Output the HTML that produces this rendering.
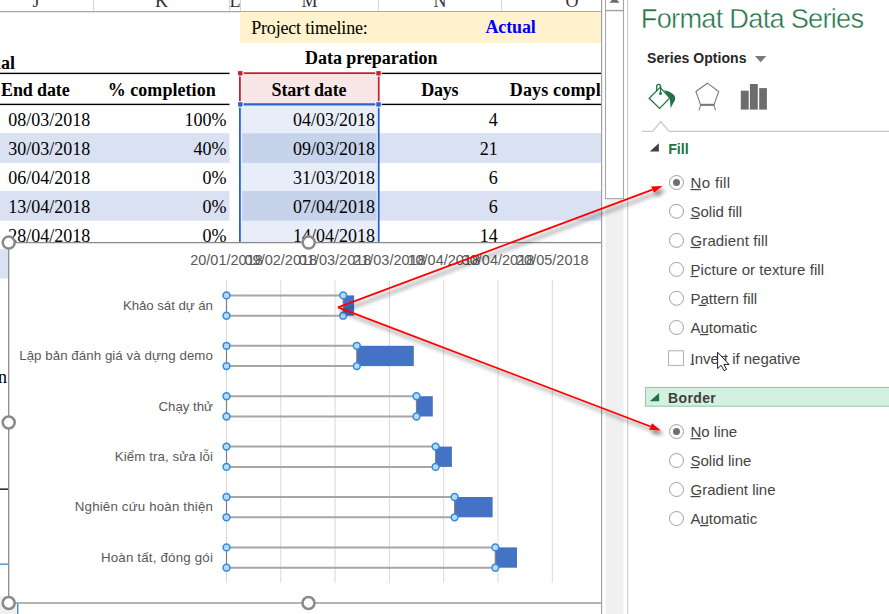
<!DOCTYPE html><html><head><meta charset="utf-8"><style>html,body{margin:0;padding:0;background:#fff;overflow:hidden}svg{display:block}</style></head><body><svg width="889" height="614" viewBox="0 0 889 614"><defs><filter id="sh" x="-20%" y="-20%" width="140%" height="140%"><feGaussianBlur in="SourceAlpha" stdDeviation="2.3"/><feOffset dx="2.5" dy="3.8" result="b"/><feComponentTransfer><feFuncA type="linear" slope="0.55"/></feComponentTransfer><feMerge><feMergeNode/><feMergeNode in="SourceGraphic"/></feMerge></filter></defs><rect width="889" height="614" fill="#fff"/><text x="36" y="6.7" font-family="Liberation Serif" font-size="18" fill="#333" text-anchor="middle">J</text><text x="161.4" y="6.7" font-family="Liberation Serif" font-size="18" fill="#333" text-anchor="middle">K</text><text x="235" y="6.7" font-family="Liberation Serif" font-size="18" fill="#333" text-anchor="middle">L</text><text x="309.5" y="6.7" font-family="Liberation Serif" font-size="18" fill="#333" text-anchor="middle">M</text><text x="440" y="6.7" font-family="Liberation Serif" font-size="18" fill="#333" text-anchor="middle">N</text><text x="572" y="6.7" font-family="Liberation Serif" font-size="18" fill="#333" text-anchor="middle">O</text><rect x="93.0" y="0" width="1" height="11" fill="#d4d4d4"/><rect x="229.0" y="0" width="1" height="11" fill="#d4d4d4"/><rect x="240.0" y="0" width="1" height="11" fill="#d4d4d4"/><rect x="378.0" y="0" width="1" height="11" fill="#d4d4d4"/><rect x="501.0" y="0" width="1" height="11" fill="#d4d4d4"/><rect x="0" y="11" width="601" height="1.3" fill="#ababab"/><rect x="240" y="12" width="361" height="31" fill="#fff2cc"/><text x="251.2" y="33.8" font-family="Liberation Serif" font-size="18" fill="#000" textLength="116.6">Project timeline:</text><text x="485.5" y="33" font-family="Liberation Serif" font-size="18" font-weight="bold" fill="#0000ff" textLength="50.3">Actual</text><text x="14.9" y="68.6" font-family="Liberation Serif" font-size="18" font-weight="bold" fill="#000" text-anchor="end">Actual</text><text x="305.1" y="63.6" font-family="Liberation Serif" font-size="18" font-weight="bold" fill="#000" textLength="132.4">Data preparation</text><rect x="0" y="133.2" width="229.5" height="29.7" fill="#d9e1f2"/><rect x="379" y="133.2" width="222" height="29.7" fill="#d9e1f2"/><rect x="0" y="191" width="229.5" height="29.7" fill="#d9e1f2"/><rect x="379" y="191" width="222" height="29.7" fill="#d9e1f2"/><rect x="0" y="249.2" width="229.5" height="29.3" fill="#d9e1f2"/><rect x="379" y="249.2" width="222" height="29.3" fill="#d9e1f2"/><rect x="0" y="72.7" width="229.5" height="1.4" fill="#000"/><rect x="379" y="72.7" width="222" height="1.4" fill="#000"/><rect x="0" y="103.7" width="229.5" height="1.4" fill="#000"/><rect x="379" y="103.7" width="222" height="1.4" fill="#000"/><rect x="241.3" y="74.6" width="135.9" height="28.6" fill="#f9e6e6"/><rect x="241" y="105.3" width="136.5" height="146" fill="#e8eef9"/><rect x="242.2" y="133.2" width="134.4" height="29.7" fill="#c7d3eb"/><rect x="242.2" y="191" width="134.4" height="29.7" fill="#c7d3eb"/><text x="1.1" y="95.7" font-family="Liberation Serif" font-size="18" font-weight="bold" fill="#000" textLength="68.6">End date</text><text x="107.7" y="95.6" font-family="Liberation Serif" font-size="18" font-weight="bold" fill="#000" textLength="108">% completion</text><text x="271.6" y="95.6" font-family="Liberation Serif" font-size="18" font-weight="bold" fill="#000" textLength="74.9">Start date</text><text x="421.3" y="95.6" font-family="Liberation Serif" font-size="18" font-weight="bold" fill="#000" textLength="37.2">Days</text><clipPath id="cp"><rect x="0" y="0" width="601" height="614"/></clipPath><text x="509.8" y="95.6" font-family="Liberation Serif" font-size="18" font-weight="bold" fill="#000" clip-path="url(#cp)" textLength="123.6">Days completed</text><text x="90.2" y="125.8" font-family="Liberation Serif" font-size="18" fill="#000" text-anchor="end">08/03/2018</text><text x="226.4" y="125.8" font-family="Liberation Serif" font-size="18" fill="#000" text-anchor="end">100%</text><text x="375" y="125.8" font-family="Liberation Serif" font-size="18" fill="#000" text-anchor="end">04/03/2018</text><text x="497.7" y="125.8" font-family="Liberation Serif" font-size="18" fill="#000" text-anchor="end">4</text><text x="90.2" y="154.8" font-family="Liberation Serif" font-size="18" fill="#000" text-anchor="end">30/03/2018</text><text x="226.4" y="154.8" font-family="Liberation Serif" font-size="18" fill="#000" text-anchor="end">40%</text><text x="375" y="154.8" font-family="Liberation Serif" font-size="18" fill="#000" text-anchor="end">09/03/2018</text><text x="497.7" y="154.8" font-family="Liberation Serif" font-size="18" fill="#000" text-anchor="end">21</text><text x="90.2" y="183.8" font-family="Liberation Serif" font-size="18" fill="#000" text-anchor="end">06/04/2018</text><text x="226.4" y="183.8" font-family="Liberation Serif" font-size="18" fill="#000" text-anchor="end">0%</text><text x="375" y="183.8" font-family="Liberation Serif" font-size="18" fill="#000" text-anchor="end">31/03/2018</text><text x="497.7" y="183.8" font-family="Liberation Serif" font-size="18" fill="#000" text-anchor="end">6</text><text x="90.2" y="212.8" font-family="Liberation Serif" font-size="18" fill="#000" text-anchor="end">13/04/2018</text><text x="226.4" y="212.8" font-family="Liberation Serif" font-size="18" fill="#000" text-anchor="end">0%</text><text x="375" y="212.8" font-family="Liberation Serif" font-size="18" fill="#000" text-anchor="end">07/04/2018</text><text x="497.7" y="212.8" font-family="Liberation Serif" font-size="18" fill="#000" text-anchor="end">6</text><text x="90.2" y="241.8" font-family="Liberation Serif" font-size="18" fill="#000" text-anchor="end">28/04/2018</text><text x="226.4" y="241.8" font-family="Liberation Serif" font-size="18" fill="#000" text-anchor="end">0%</text><text x="375" y="241.8" font-family="Liberation Serif" font-size="18" fill="#000" text-anchor="end">14/04/2018</text><text x="497.7" y="241.8" font-family="Liberation Serif" font-size="18" fill="#000" text-anchor="end">14</text><rect x="239.9" y="73.2" width="138.8" height="31.2" fill="none" stroke="#c3202e" stroke-width="1.8"/><path d="M239.9 104.4 V250 M378.7 104.4 V250 M239.9 104.4 H378.7" fill="none" stroke="#2b62c9" stroke-width="1.8"/><rect x="237.60000000000002" y="70.6" width="5.4" height="5.4" fill="#c3202e" stroke="#fff" stroke-width="1"/><rect x="237.60000000000002" y="101.7" width="5.4" height="5.4" fill="#2b62c9" stroke="#fff" stroke-width="1"/><rect x="375.8" y="70.6" width="5.4" height="5.4" fill="#c3202e" stroke="#fff" stroke-width="1"/><rect x="375.8" y="101.7" width="5.4" height="5.4" fill="#2b62c9" stroke="#fff" stroke-width="1"/><text x="7" y="383" font-family="Liberation Serif" font-size="18" fill="#000" text-anchor="end">n</text><rect x="0" y="488.5" width="8" height="1.3" fill="#000"/><rect x="0" y="563.5" width="8" height="1.3" fill="#2d8ce0"/><rect x="0" y="596" width="16" height="18" fill="#f0f0f0"/><rect x="17" y="603" width="1.4" height="11" fill="#2d8ce0"/><rect x="8.7" y="242.6" width="600" height="360.4" fill="#fff"/><rect x="8.7" y="242.6" width="600.3" height="360.4" fill="none" stroke="#8c8c8c" stroke-width="1.3"/><rect x="226.0" y="280.4" width="1" height="302.3" fill="#d9d9d9"/><rect x="280.3" y="280.4" width="1" height="302.3" fill="#d9d9d9"/><rect x="334.6" y="280.4" width="1" height="302.3" fill="#d9d9d9"/><rect x="388.9" y="280.4" width="1" height="302.3" fill="#d9d9d9"/><rect x="443.2" y="280.4" width="1" height="302.3" fill="#d9d9d9"/><rect x="497.5" y="280.4" width="1" height="302.3" fill="#d9d9d9"/><rect x="551.8" y="280.4" width="1" height="302.3" fill="#d9d9d9"/><text x="226.5" y="264.8" font-family="Liberation Sans" font-size="14.5" fill="#595959" text-anchor="middle">20/01/2018</text><text x="280.8" y="264.8" font-family="Liberation Sans" font-size="14.5" fill="#595959" text-anchor="middle">09/02/2018</text><text x="335.1" y="264.8" font-family="Liberation Sans" font-size="14.5" fill="#595959" text-anchor="middle">01/03/2018</text><text x="389.4" y="264.8" font-family="Liberation Sans" font-size="14.5" fill="#595959" text-anchor="middle">21/03/2018</text><text x="443.7" y="264.8" font-family="Liberation Sans" font-size="14.5" fill="#595959" text-anchor="middle">10/04/2018</text><text x="498.0" y="264.8" font-family="Liberation Sans" font-size="14.5" fill="#595959" text-anchor="middle">30/04/2018</text><text x="552.3" y="264.8" font-family="Liberation Sans" font-size="14.5" fill="#595959" text-anchor="middle">20/05/2018</text><text x="122.9" y="309.9" font-family="Liberation Sans" font-size="13.3" fill="#595959" textLength="90">Khảo sát dự án</text><rect x="343.2" y="295.4" width="10.9" height="20.3" fill="#4472c4"/><path d="M226.5 295.4 H343.2 M226.5 315.7 H343.2" stroke="#a6a6a6" stroke-width="2" fill="none"/><path d="M226.5 295.4 V315.7 M343.2 295.4 V315.7" stroke="#808080" stroke-width="1.2" fill="none"/><circle cx="226.5" cy="295.4" r="3.4" fill="#b9d8f3" stroke="#2f8be0" stroke-width="1.5"/><circle cx="226.5" cy="315.7" r="3.4" fill="#b9d8f3" stroke="#2f8be0" stroke-width="1.5"/><circle cx="343.2" cy="295.4" r="3.4" fill="#b9d8f3" stroke="#2f8be0" stroke-width="1.5"/><circle cx="343.2" cy="315.7" r="3.4" fill="#b9d8f3" stroke="#2f8be0" stroke-width="1.5"/><text x="19.200000000000017" y="360.3" font-family="Liberation Sans" font-size="13.3" fill="#595959" textLength="193.7">Lập bản đánh giá và dựng demo</text><rect x="356.8" y="345.8" width="57.0" height="20.3" fill="#4472c4"/><path d="M226.5 345.8 H356.8 M226.5 366.1 H356.8" stroke="#a6a6a6" stroke-width="2" fill="none"/><path d="M226.5 345.8 V366.1 M356.8 345.8 V366.1" stroke="#808080" stroke-width="1.2" fill="none"/><circle cx="226.5" cy="345.8" r="3.4" fill="#b9d8f3" stroke="#2f8be0" stroke-width="1.5"/><circle cx="226.5" cy="366.1" r="3.4" fill="#b9d8f3" stroke="#2f8be0" stroke-width="1.5"/><circle cx="356.8" cy="345.8" r="3.4" fill="#b9d8f3" stroke="#2f8be0" stroke-width="1.5"/><circle cx="356.8" cy="366.1" r="3.4" fill="#b9d8f3" stroke="#2f8be0" stroke-width="1.5"/><text x="158.5" y="410.7" font-family="Liberation Sans" font-size="13.3" fill="#595959" textLength="54.4">Chạy thử</text><rect x="416.5" y="396.2" width="16.3" height="20.3" fill="#4472c4"/><path d="M226.5 396.2 H416.5 M226.5 416.5 H416.5" stroke="#a6a6a6" stroke-width="2" fill="none"/><path d="M226.5 396.2 V416.5 M416.5 396.2 V416.5" stroke="#808080" stroke-width="1.2" fill="none"/><circle cx="226.5" cy="396.2" r="3.4" fill="#b9d8f3" stroke="#2f8be0" stroke-width="1.5"/><circle cx="226.5" cy="416.5" r="3.4" fill="#b9d8f3" stroke="#2f8be0" stroke-width="1.5"/><circle cx="416.5" cy="396.2" r="3.4" fill="#b9d8f3" stroke="#2f8be0" stroke-width="1.5"/><circle cx="416.5" cy="416.5" r="3.4" fill="#b9d8f3" stroke="#2f8be0" stroke-width="1.5"/><text x="114.80000000000001" y="461.0" font-family="Liberation Sans" font-size="13.3" fill="#595959" textLength="98.1">Kiểm tra, sửa lỗi</text><rect x="435.6" y="446.6" width="16.3" height="20.3" fill="#4472c4"/><path d="M226.5 446.6 H435.6 M226.5 466.9 H435.6" stroke="#a6a6a6" stroke-width="2" fill="none"/><path d="M226.5 446.6 V466.9 M435.6 446.6 V466.9" stroke="#808080" stroke-width="1.2" fill="none"/><circle cx="226.5" cy="446.6" r="3.4" fill="#b9d8f3" stroke="#2f8be0" stroke-width="1.5"/><circle cx="226.5" cy="466.9" r="3.4" fill="#b9d8f3" stroke="#2f8be0" stroke-width="1.5"/><circle cx="435.6" cy="446.6" r="3.4" fill="#b9d8f3" stroke="#2f8be0" stroke-width="1.5"/><circle cx="435.6" cy="466.9" r="3.4" fill="#b9d8f3" stroke="#2f8be0" stroke-width="1.5"/><text x="74.80000000000001" y="511.4" font-family="Liberation Sans" font-size="13.3" fill="#595959" textLength="138.1">Nghiên cứu hoàn thiện</text><rect x="454.6" y="497.0" width="38.0" height="20.3" fill="#4472c4"/><path d="M226.5 497.0 H454.6 M226.5 517.3 H454.6" stroke="#a6a6a6" stroke-width="2" fill="none"/><path d="M226.5 497.0 V517.3 M454.6 497.0 V517.3" stroke="#808080" stroke-width="1.2" fill="none"/><circle cx="226.5" cy="497.0" r="3.4" fill="#b9d8f3" stroke="#2f8be0" stroke-width="1.5"/><circle cx="226.5" cy="517.3" r="3.4" fill="#b9d8f3" stroke="#2f8be0" stroke-width="1.5"/><circle cx="454.6" cy="497.0" r="3.4" fill="#b9d8f3" stroke="#2f8be0" stroke-width="1.5"/><circle cx="454.6" cy="517.3" r="3.4" fill="#b9d8f3" stroke="#2f8be0" stroke-width="1.5"/><text x="100.9" y="561.8" font-family="Liberation Sans" font-size="13.3" fill="#595959" textLength="112">Hoàn tất, đóng gói</text><rect x="495.3" y="547.4" width="21.7" height="20.3" fill="#4472c4"/><path d="M226.5 547.4 H495.3 M226.5 567.7 H495.3" stroke="#a6a6a6" stroke-width="2" fill="none"/><path d="M226.5 547.4 V567.7 M495.3 547.4 V567.7" stroke="#808080" stroke-width="1.2" fill="none"/><circle cx="226.5" cy="547.4" r="3.4" fill="#b9d8f3" stroke="#2f8be0" stroke-width="1.5"/><circle cx="226.5" cy="567.7" r="3.4" fill="#b9d8f3" stroke="#2f8be0" stroke-width="1.5"/><circle cx="495.3" cy="547.4" r="3.4" fill="#b9d8f3" stroke="#2f8be0" stroke-width="1.5"/><circle cx="495.3" cy="567.7" r="3.4" fill="#b9d8f3" stroke="#2f8be0" stroke-width="1.5"/><circle cx="8.7" cy="242.6" r="6" fill="#fff" stroke="#8a8a8a" stroke-width="2.5"/><circle cx="308.7" cy="242.6" r="6" fill="#fff" stroke="#8a8a8a" stroke-width="2.5"/><circle cx="8.7" cy="422.5" r="6" fill="#fff" stroke="#8a8a8a" stroke-width="2.5"/><circle cx="8.7" cy="603" r="6" fill="#fff" stroke="#8a8a8a" stroke-width="2.5"/><circle cx="308.5" cy="603" r="6" fill="#fff" stroke="#8a8a8a" stroke-width="2.5"/><rect x="601.5" y="0" width="26" height="614" fill="#fff"/><rect x="601" y="0" width="1.2" height="614" fill="#a0a0a0"/><rect x="605.5" y="0" width="18" height="614" fill="#f0f0f0"/><rect x="605.5" y="-1" width="18" height="199.6" fill="#fff" stroke="#a6a6a6" stroke-width="1.1"/><rect x="605.5" y="9.8" width="18" height="1.5" fill="#a6a6a6"/><path d="M609.5 2.7 L619.5 2.7 L614.5 -3 Z" fill="#6a6a6a"/><rect x="627" y="0" width="1.2" height="614" fill="#d0d0d0"/><text x="640.8" y="28" font-family="Liberation Sans" font-size="27.2" fill="#217346" textLength="223.3">Format Data Series</text><text x="640.8" y="28" font-family="Liberation Sans" font-size="27.2" fill="none" stroke="#fff" stroke-width="0.45" textLength="223.3">Format Data Series</text><text x="647" y="63.3" font-family="Liberation Sans" font-size="14" font-weight="bold" fill="#262626" textLength="99.5">Series Options</text><path d="M755 56 L766.3 56 L760.65 62.3 Z" fill="#7a7a7a"/><g fill="none" stroke="#217346" stroke-width="1.25"><path d="M649.2 98.2 L659.6 108.4 L669.9 98 L660.1 87.3 Z"/><path d="M656.7 91.2 V86.6 Q656.7 84.4 658.65 84.4 Q660.6 84.4 660.6 86.6 V93.5"/></g><circle cx="660.5" cy="93.6" r="1.5" fill="#217346"/><path d="M664 90.2 Q671.5 91.5 674.6 95.8 Q676.3 99.5 673.4 102.8 L670.6 108.2 L669.9 98 Z" fill="#217346"/><g fill="none" stroke="#777" stroke-width="1.05"><path d="M707.4 83.2 L718.7 91.5 L714 104.9 L700.6 104.9 L695.9 91.5 Z"/><path d="M700.6 104.9 L699 110.5 M714 104.9 L715.5 110.5" stroke-width="1"/></g><rect x="700.6" y="103.8" width="13.4" height="2" fill="#777"/><g fill="#6d6d6d"><rect x="740.8" y="90.7" width="7.9" height="18.9"/><rect x="749.9" y="84" width="7.9" height="25.6"/><rect x="759.2" y="88.1" width="7.7" height="21.5"/></g><path d="M642 131.3 H652.6 L660.8 121.5 L669.1 131.3 H889" fill="none" stroke="#c8c8c8" stroke-width="1.2"/><path d="M649.8 151.5 L658.9 151.5 L658.9 143.2 Z" fill="#404040"/><text x="668.2" y="153.9" font-family="Liberation Sans" font-size="14.3" font-weight="bold" fill="#217346" textLength="20.5">Fill</text><circle cx="676.5" cy="182.5" r="7" fill="#fff" stroke="#a0a0a0" stroke-width="1"/><circle cx="676.5" cy="182.5" r="3.5" fill="#707070"/><text x="690.5" y="187.9" font-family="Liberation Sans" font-size="15" fill="#444" textLength="39.6">No fill</text><circle cx="676.5" cy="211.3" r="7" fill="#fff" stroke="#a0a0a0" stroke-width="1"/><text x="690.5" y="216.7" font-family="Liberation Sans" font-size="15" fill="#444">Solid fill</text><circle cx="676.5" cy="240.4" r="7" fill="#fff" stroke="#a0a0a0" stroke-width="1"/><text x="690.5" y="245.8" font-family="Liberation Sans" font-size="15" fill="#444" textLength="77.3">Gradient fill</text><circle cx="676.5" cy="269.4" r="7" fill="#fff" stroke="#a0a0a0" stroke-width="1"/><text x="690.5" y="274.8" font-family="Liberation Sans" font-size="15" fill="#444" textLength="133.5">Picture or texture fill</text><circle cx="676.5" cy="298.3" r="7" fill="#fff" stroke="#a0a0a0" stroke-width="1"/><text x="690.5" y="303.7" font-family="Liberation Sans" font-size="15" fill="#444">Pattern fill</text><circle cx="676.5" cy="327.5" r="7" fill="#fff" stroke="#a0a0a0" stroke-width="1"/><text x="690.5" y="332.9" font-family="Liberation Sans" font-size="15" fill="#444">Automatic</text><rect x="690.5" y="189.0" width="10.5" height="1.2" fill="#444"/><rect x="690.5" y="217.8" width="8.5" height="1.2" fill="#444"/><rect x="690.5" y="246.9" width="10.0" height="1.2" fill="#444"/><rect x="690.5" y="275.9" width="8.0" height="1.2" fill="#444"/><rect x="698.5" y="304.8" width="8.0" height="1.2" fill="#444"/><rect x="700" y="334.0" width="8.5" height="1.2" fill="#444"/><rect x="668.5" y="350.8" width="15" height="14.6" fill="#fff" stroke="#b0b0b0" stroke-width="1"/><text x="690.6" y="363.5" font-family="Liberation Sans" font-size="15" fill="#444" textLength="109.8">Invert if negative</text><rect x="690.5" y="363.7" width="3.5" height="1.2" fill="#444"/><rect x="645.5" y="387.5" width="250" height="18.7" fill="#d3f0e0" stroke="#8dcba5" stroke-width="1"/><path d="M649.8 401.3 L659.1 401.3 L659.1 393.1 Z" fill="#217346"/><text x="668" y="402.7" font-family="Liberation Sans" font-size="14" font-weight="bold" fill="#404040" textLength="47.8">Border</text><circle cx="676.5" cy="431.6" r="7" fill="#fff" stroke="#a0a0a0" stroke-width="1"/><circle cx="676.5" cy="431.6" r="3.5" fill="#707070"/><text x="690.5" y="437.0" font-family="Liberation Sans" font-size="15" fill="#444">No line</text><circle cx="676.5" cy="460.5" r="7" fill="#fff" stroke="#a0a0a0" stroke-width="1"/><text x="690.5" y="465.9" font-family="Liberation Sans" font-size="15" fill="#444">Solid line</text><circle cx="676.5" cy="489.5" r="7" fill="#fff" stroke="#a0a0a0" stroke-width="1"/><text x="690.5" y="494.9" font-family="Liberation Sans" font-size="15" fill="#444">Gradient line</text><circle cx="676.5" cy="518.5" r="7" fill="#fff" stroke="#a0a0a0" stroke-width="1"/><text x="690.5" y="523.9" font-family="Liberation Sans" font-size="15" fill="#444">Automatic</text><rect x="690.5" y="438.1" width="10.5" height="1.2" fill="#444"/><rect x="690.5" y="467.0" width="8.5" height="1.2" fill="#444"/><rect x="690.5" y="496.0" width="10.0" height="1.2" fill="#444"/><rect x="700" y="525.0" width="8.5" height="1.2" fill="#444"/><path d="M717.6 352.2 L717.6 368.6 L721.1 365.3 L724 370.7 L726.5 369.5 L723.9 364.4 L729 364.4 Z" fill="#fff" stroke="#1a1a2e" stroke-width="1"/><g filter="url(#sh)"><path d="M338 307.4 L652.5 189.7" stroke="#ff0000" stroke-width="1.8" fill="none"/><path d="M662.5 186 L651 186.5 L654.1 192.8 Z" fill="#ff0000"/></g><g filter="url(#sh)"><path d="M338 307.4 L650.5 426.5" stroke="#ff0000" stroke-width="1.8" fill="none"/><path d="M660.8 430.5 L652 423.2 L649.1 429.8 Z" fill="#ff0000"/></g></svg></body></html>
